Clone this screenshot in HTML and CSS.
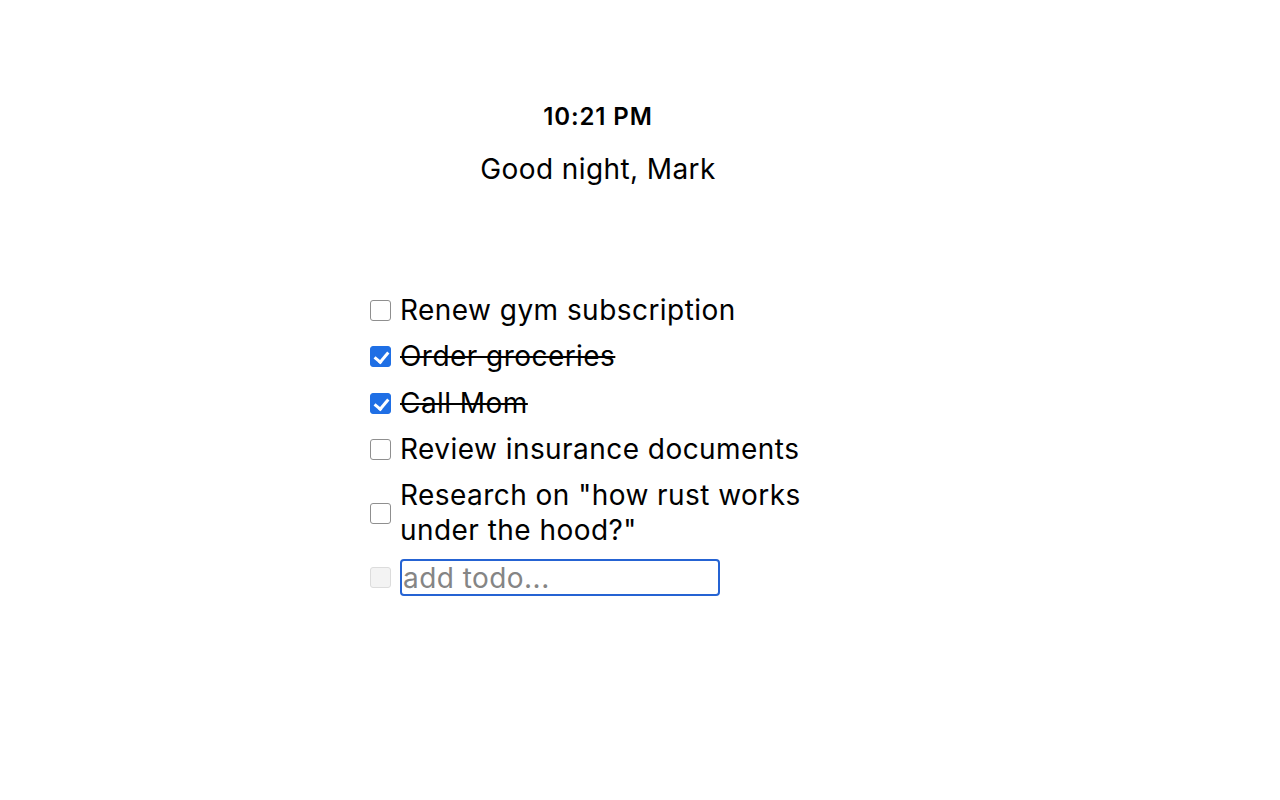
FILE: index.html
```html
<!DOCTYPE html>
<html lang="en">
<head>
<meta charset="utf-8">
<title>Todo</title>
<link rel="stylesheet" href="styles.css">
</head>
<body>
<div class="page">
  <main class="app">
    <header class="header">
      <div class="time">10:21 PM</div>
      <h1 class="greeting">Good night, Mark</h1>
    </header>
    <ul class="todos">
      <li class="todo"><input type="checkbox" class="check"><span class="label">Renew gym subscription</span></li>
      <li class="todo done"><input type="checkbox" class="check" checked><span class="label">Order groceries</span></li>
      <li class="todo done"><input type="checkbox" class="check" checked><span class="label">Call Mom</span></li>
      <li class="todo"><input type="checkbox" class="check"><span class="label">Review insurance documents</span></li>
      <li class="todo"><input type="checkbox" class="check"><span class="label">Research on "how rust works under the hood?"</span></li>
      <li class="todo new"><input type="checkbox" class="check" disabled><input type="text" class="add" placeholder="add todo..."></li>
    </ul>
  </main>
</div>
</body>
</html>
```

FILE: styles.css
```css
* { box-sizing: border-box; }
html, body { margin: 0; padding: 0; background: #fff; }
body {
  font-family: Inter, "Liberation Sans", Arial, sans-serif;
  color: #000;
}
.page {
  display: flex;
  justify-content: center;
  padding-right: 84px;
}
.app {
  width: 456px;
  padding-top: 103px;
}
.header {
  text-align: center;
}
.time {
  font-size: 24px;
  font-weight: 600;
  line-height: 28px;
  letter-spacing: 0.9px;
}
.greeting {
  margin: 21px 0 0;
  font-size: 28px;
  font-weight: 400;
  line-height: 34px;
  letter-spacing: 0.4px;
}
.todos {
  list-style: none;
  margin: 107px 0 0;
  padding: 0;
  display: flex;
  flex-direction: column;
  gap: 11.3px;
}
.todo {
  display: flex;
  align-items: center;
  gap: 9px;
  font-size: 28px;
  line-height: 35px;
  letter-spacing: 0.45px;
}
.check {
  appearance: none;
  -webkit-appearance: none;
  flex: none;
  width: 21px;
  height: 21px;
  margin: 0;
  border: 1px solid #8f8f8f;
  border-radius: 3px;
  background: #fff;
  position: relative;
}
.check:checked {
  background: #1f6fe5;
  border-color: #1f6fe5;
}
.check:checked::after {
  content: "";
  position: absolute;
  left: 6px;
  top: 2px;
  width: 6px;
  height: 11px;
  border: solid #fff;
  border-width: 0 3px 3px 0;
  transform: rotate(40deg);
}
.check:disabled {
  background: #f3f3f3;
  border-color: #dcdcdc;
}
.done .label {
  text-decoration: line-through;
}
.add {
  width: 320px;
  height: 37px;
  margin: 0;
  padding: 0 1px;
  font: inherit;
  font-size: 28px;
  letter-spacing: 0.45px;
  color: #000;
  border: 2px solid #2563d3;
  border-radius: 4px;
  outline: none;
  background: #fff;
}
.add::placeholder {
  color: #858585;
}
```
